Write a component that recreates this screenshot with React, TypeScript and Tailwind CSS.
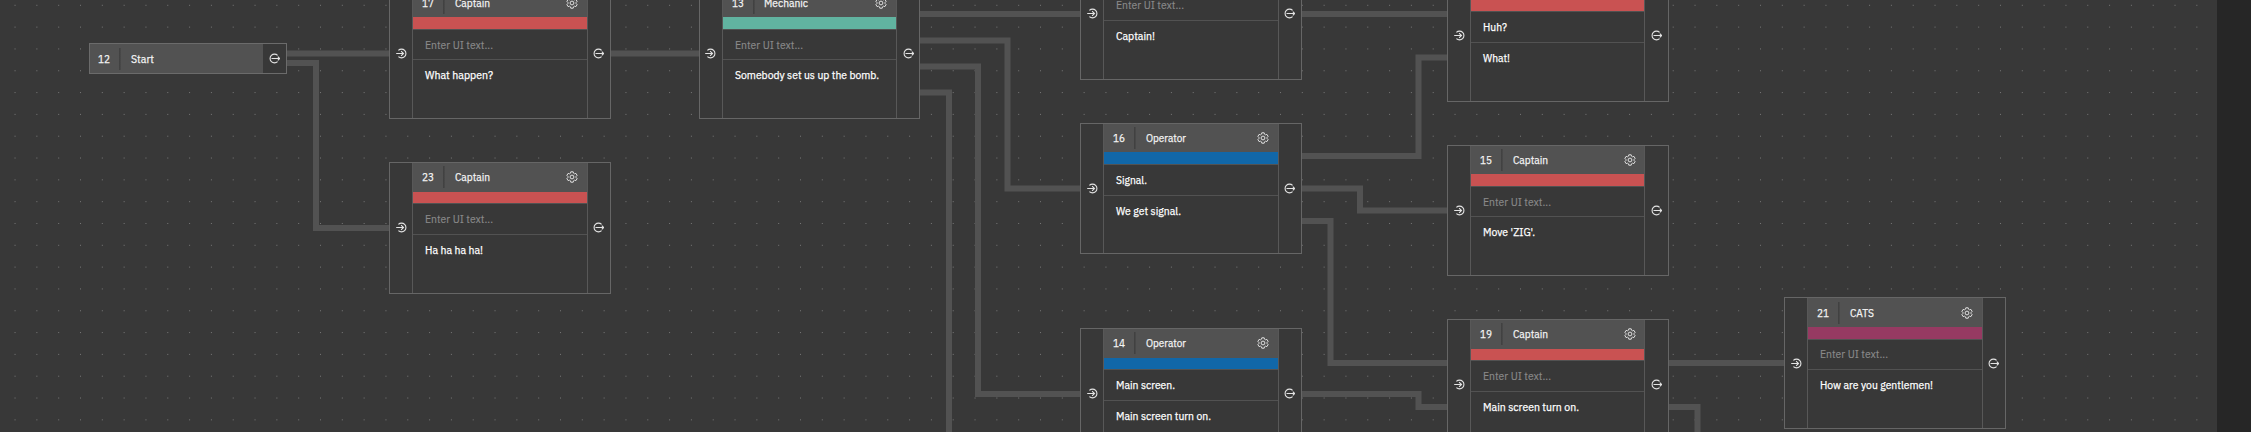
import React from "react";

type NodeProps = {
  id: string;
  name: string;
  x: number;
  y: number;
  color: string;
  ui?: string;
  uiWidth?: number;
  text: string;
  textWidth: number;
  nameWidth: number;
};

const nodes: NodeProps[] = [
  { id: "17", name: "Captain", nameWidth: 35, x: 389.3, y: -12.5, color: "bg-[#c95252]", text: "What happen?", textWidth: 68 },
  { id: "23", name: "Captain", nameWidth: 35, x: 389.3, y: 162, color: "bg-[#c95252]", text: "Ha ha ha ha!", textWidth: 58 },
  { id: "13", name: "Mechanic", nameWidth: 44, x: 698.6, y: -12.5, color: "bg-[#61b3a0]", text: "Somebody set us up the bomb.", textWidth: 144 },
  { id: "11", name: "Operator", nameWidth: 40, x: 1080.4, y: -51.8, color: "bg-[#1167a8]", text: "Captain!", textWidth: 39 },
  { id: "16", name: "Operator", nameWidth: 40, x: 1080.4, y: 122.8, color: "bg-[#1167a8]", ui: "Signal.", uiWidth: 31, text: "We get signal.", textWidth: 65 },
  { id: "14", name: "Operator", nameWidth: 40, x: 1080.4, y: 328, color: "bg-[#1167a8]", ui: "Main screen.", uiWidth: 59, text: "Main screen turn on.", textWidth: 95 },
  { id: "18", name: "Captain", nameWidth: 35, x: 1447.2, y: -30, color: "bg-[#c95252]", ui: "Huh?", uiWidth: 24, text: "What!", textWidth: 27 },
  { id: "15", name: "Captain", nameWidth: 35, x: 1447.2, y: 144.6, color: "bg-[#c95252]", text: "Move 'ZIG'.", textWidth: 52 },
  { id: "19", name: "Captain", nameWidth: 35, x: 1447.2, y: 319, color: "bg-[#c95252]", text: "Main screen turn on.", textWidth: 96 },
  { id: "21", name: "CATS", nameWidth: 24, x: 1784.4, y: 297.3, color: "bg-[#963a62]", text: "How are you gentlemen!", textWidth: 113 },
];

const wires = [
  "M286 53.5H390",
  "M286 63H316V228H390",
  "M610 53.5H699",
  "M919 14H1081",
  "M919 40.5H1007.5V188.5H1081",
  "M919 66.5H978V394H1081",
  "M919 92.5H949V440",
  "M1301 14H1448",
  "M1301 156H1418.5V57.5H1448",
  "M1301 188.5H1360V210.5H1448",
  "M1301 221H1330.5V363H1448",
  "M1301 394H1418.5V407H1448",
  "M1668 363H1785",
  "M1668 407H1697.5V440",
];

function Label({ children, width, className }: { children: string; width: number; className: string }) {
  return (
    <svg className="block h-4 overflow-visible" style={{ width }} aria-label={children}>
      <text y="11.8" textLength={width} lengthAdjust="spacingAndGlyphs" className={className}>
        {children}
      </text>
    </svg>
  );
}

function InIcon() {
  return (
    <svg className="h-[11px] w-[11px]" viewBox="0 0 11 11" fill="none" stroke="#e4e4e4" strokeWidth="1.1">
      <path d="M2.4 2.4A4.4 4.4 0 1 1 2.4 8.6M0.2 5.5H7.3M5.1 3.2L7.5 5.5L5.1 7.8" />
    </svg>
  );
}

function OutIcon() {
  return (
    <svg className="h-[11px] w-[11px]" viewBox="0 0 11 11" fill="none" stroke="#e4e4e4" strokeWidth="1.1">
      <path d="M8.6 2.4A4.4 4.4 0 1 0 8.6 8.6M2.5 5.5H10.6M8.8 3.7L10.7 5.5L8.8 7.3" />
    </svg>
  );
}

function GearIcon() {
  return (
    <svg className="h-[12px] w-[12px]" viewBox="0 0 12 12" fill="none" stroke="#e0e0e0" strokeWidth="1" strokeLinejoin="round">
      <path d="M4.8 .8H7.2L7.5 2.2L8.5 2.8L9.9 2.4L11.1 4.4L10.1 5.4V6.6L11.1 7.6L9.9 9.6L8.5 9.2L7.5 9.8L7.2 11.2H4.8L4.5 9.8L3.5 9.2L2.1 9.6L.9 7.6L1.9 6.6V5.4L.9 4.4L2.1 2.4L3.5 2.8L4.5 2.2Z" />
      <circle cx="6" cy="6" r="1.9" />
    </svg>
  );
}

function Heading({ id, name, width }: { id: string; name: string; width: number }) {
  return (
    <>
      <div className="flex h-full w-[30px] shrink-0 items-center pl-[9px]">
        <Label width={12} className="fill-[#f4f4f4] stroke-[#f4f4f4] stroke-[0.25] text-[11px]">{id}</Label>
      </div>
      <div className="h-[22px] w-[2px] shrink-0 bg-linear-to-r from-[#3e3e3e] to-[#4b4b4b]" />
      <div className="flex flex-1 items-center pl-[9.7px]">
        <Label width={width} className="fill-[#f4f4f4] stroke-[#f4f4f4] stroke-[0.25] text-[11px]">{name}</Label>
      </div>
    </>
  );
}

function DialogueNode({ id, name, nameWidth, x, y, color, ui, uiWidth, text, textWidth }: NodeProps) {
  return (
    <section
      className="absolute flex h-[131.5px] w-[221.6px] border border-[#666666] bg-[#383838]"
      style={{ left: x, top: y }}
    >
      <div className="flex w-[22px] shrink-0 items-center justify-center">
        <InIcon />
      </div>
      <div className="flex min-w-0 flex-1 flex-col border-x border-[#585858]">
        <header className="flex h-[28.7px] shrink-0 items-center bg-[#525252] pr-[8.5px]">
          <Heading id={id} name={name} width={nameWidth} />
          <GearIcon />
        </header>
        <div className={`h-[11.8px] shrink-0 ${color}`} />
        <div className="flex h-[31.3px] shrink-0 items-center border-y border-[#525252] pl-[12px]">
          {ui ? (
            <Label width={uiWidth ?? 30} className="fill-white stroke-white stroke-[0.25] text-[11px]">{ui}</Label>
          ) : (
            <Label width={68} className="fill-[#8a8a8a] stroke-[#8a8a8a] stroke-[0.15] text-[11px]">Enter UI text...</Label>
          )}
        </div>
        <div className="flex pl-[12px] pt-[7.1px]">
          <Label width={textWidth} className="fill-white stroke-white stroke-[0.25] text-[11px]">{text}</Label>
        </div>
      </div>
      <div className="flex w-[22.3px] shrink-0 items-center justify-center">
        <OutIcon />
      </div>
    </section>
  );
}

export default function App() {
  return (
    <main className="flex h-[432px] w-full overflow-hidden bg-[#262626] font-['IBM_Plex_Sans','Roboto','Liberation_Sans',sans-serif]">
      <div className="relative h-full w-[2217px] shrink-0 overflow-hidden bg-[#383838]">
        <svg className="absolute inset-0 h-full w-full">
          <defs>
            <pattern id="dots" x="80" y="4.8" width="21.818" height="21.818" patternUnits="userSpaceOnUse">
              <rect width="1" height="1" fill="#777777" />
            </pattern>
          </defs>
          <rect width="100%" height="100%" fill="url(#dots)" />
          {wires.map((d) => (
            <path key={d} d={d} fill="none" stroke="#525252" strokeWidth="6" />
          ))}
        </svg>
        <section className="absolute left-[89px] top-[43px] flex h-[31px] w-[198px] border border-[#6b6b6b] bg-[#525252]">
          <div className="-ml-px flex flex-1 items-center">
            <Heading id="12" name="Start" width={23} />
          </div>
          <div className="flex w-[23px] items-center justify-center bg-[#383838]">
            <OutIcon />
          </div>
        </section>
        {nodes.map((node) => (
          <DialogueNode key={node.id} {...node} />
        ))}
      </div>
    </main>
  );
}
